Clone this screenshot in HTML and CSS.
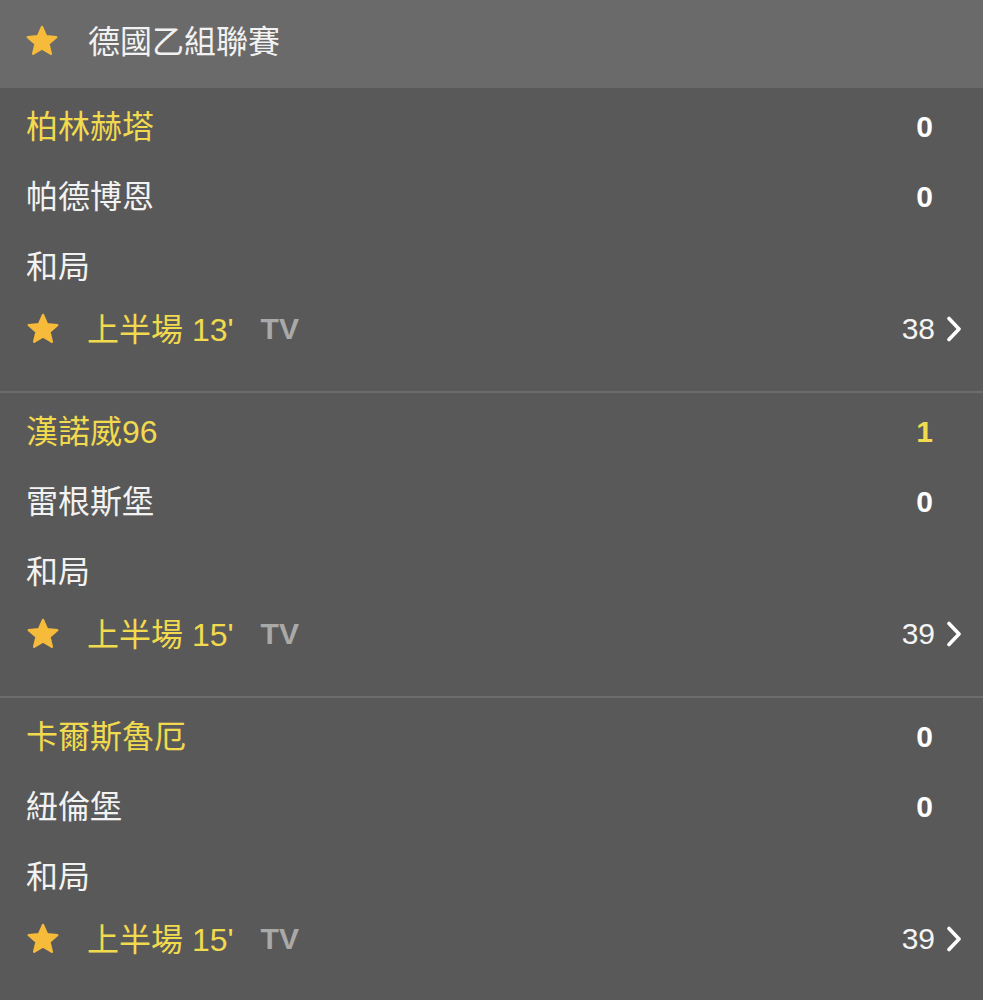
FILE: index.html
```html
<!DOCTYPE html>
<html>
<head>
    <title>德國乙組聯賽</title>
    <link rel="stylesheet" href="styles.css">
</head>
<body>
    <div class="league-header">
        <svg class="star" viewBox="0 0 24 24"><path d="M12 2.6l2.7 6.2 6.8.6-5.2 4.5 1.6 6.6L12 17l-5.9 3.5 1.6-6.6-5.2-4.5 6.8-.6z"/></svg>
        <span class="league-name">德國乙組聯賽</span>
    </div>

    <div class="match">
        <div class="team-row home"><span class="name">柏林赫塔</span><span class="score">0</span></div>
        <div class="team-row"><span class="name">帕德博恩</span><span class="score">0</span></div>
        <div class="team-row"><span class="name">和局</span></div>
        <div class="status-row">
            <div class="status-left">
                <svg class="star" viewBox="0 0 24 24"><path d="M12 2.6l2.7 6.2 6.8.6-5.2 4.5 1.6 6.6L12 17l-5.9 3.5 1.6-6.6-5.2-4.5 6.8-.6z"/></svg>
                <span class="time">上半場 13'</span>
                <span class="tv">TV</span>
            </div>
            <div class="status-right">
                <span class="count">38</span>
                <svg class="chevron" viewBox="0 0 16 26"><path d="M3 2.5l10 10.5L3 23.5"/></svg>
            </div>
        </div>
    </div>

    <div class="match">
        <div class="team-row home"><span class="name">漢諾威96</span><span class="score lead">1</span></div>
        <div class="team-row"><span class="name">雷根斯堡</span><span class="score">0</span></div>
        <div class="team-row"><span class="name">和局</span></div>
        <div class="status-row">
            <div class="status-left">
                <svg class="star" viewBox="0 0 24 24"><path d="M12 2.6l2.7 6.2 6.8.6-5.2 4.5 1.6 6.6L12 17l-5.9 3.5 1.6-6.6-5.2-4.5 6.8-.6z"/></svg>
                <span class="time">上半場 15'</span>
                <span class="tv">TV</span>
            </div>
            <div class="status-right">
                <span class="count">39</span>
                <svg class="chevron" viewBox="0 0 16 26"><path d="M3 2.5l10 10.5L3 23.5"/></svg>
            </div>
        </div>
    </div>

    <div class="match">
        <div class="team-row home"><span class="name">卡爾斯魯厄</span><span class="score">0</span></div>
        <div class="team-row"><span class="name">紐倫堡</span><span class="score">0</span></div>
        <div class="team-row"><span class="name">和局</span></div>
        <div class="status-row">
            <div class="status-left">
                <svg class="star" viewBox="0 0 24 24"><path d="M12 2.6l2.7 6.2 6.8.6-5.2 4.5 1.6 6.6L12 17l-5.9 3.5 1.6-6.6-5.2-4.5 6.8-.6z"/></svg>
                <span class="time">上半場 15'</span>
                <span class="tv">TV</span>
            </div>
            <div class="status-right">
                <span class="count">39</span>
                <svg class="chevron" viewBox="0 0 16 26"><path d="M3 2.5l10 10.5L3 23.5"/></svg>
            </div>
        </div>
    </div>
</body>
</html>
```

FILE: styles.css
```css
body {
    margin: 0;
    background-color: #595959;
    font-family: "Liberation Sans", "Noto Sans CJK TC", sans-serif;
    color: #f2f2f2;
    font-size: 32px;
}
.league-header {
    height: 88px;
    display: flex;
    align-items: center;
    padding: 0 24px;
    background-color: #6a6a6a;
    box-sizing: border-box;
}
.league-header .league-name {
    margin-left: 28px;
    margin-top: -10px;
}
.star {
    width: 36px;
    height: 36px;
    flex-shrink: 0;
}
.star path {
    fill: #f6bb3a;
    stroke: #f6bb3a;
    stroke-width: 1.6;
    stroke-linejoin: round;
}
.league-header .star {
    margin-top: -6px;
}
.match {
    padding: 4px 0 35px;
    border-bottom: 2px solid #6c6c6c;
}
.match:last-child {
    border-bottom: none;
}
.team-row {
    height: 70px;
    display: flex;
    align-items: center;
    justify-content: space-between;
    padding: 0 50px 0 26px;
}
.team-row .name {
    margin-top: -6px;
}
.team-row.home {
    color: #f1da4e;
}
.score {
    font-weight: bold;
    font-size: 30px;
    color: #ffffff;
}
.score.lead {
    color: #f1da4e;
}
.status-row {
    height: 54px;
    display: flex;
    align-items: center;
    justify-content: space-between;
    padding: 0 21px 0 25px;
}
.status-left {
    display: flex;
    align-items: center;
}
.time {
    margin-left: 26px;
    margin-top: -4px;
    color: #f1da4e;
}
.tv {
    margin-left: 27px;
    font-weight: bold;
    font-size: 30px;
    color: #a9a9a9;
}
.status-right {
    display: flex;
    align-items: center;
}
.count {
    font-size: 30px;
    color: #f4f4f4;
}
.chevron {
    width: 16px;
    height: 26px;
    margin-left: 11px;
}
.chevron path {
    fill: none;
    stroke: #ffffff;
    stroke-width: 3.6;
    stroke-linecap: round;
    stroke-linejoin: round;
}
```
